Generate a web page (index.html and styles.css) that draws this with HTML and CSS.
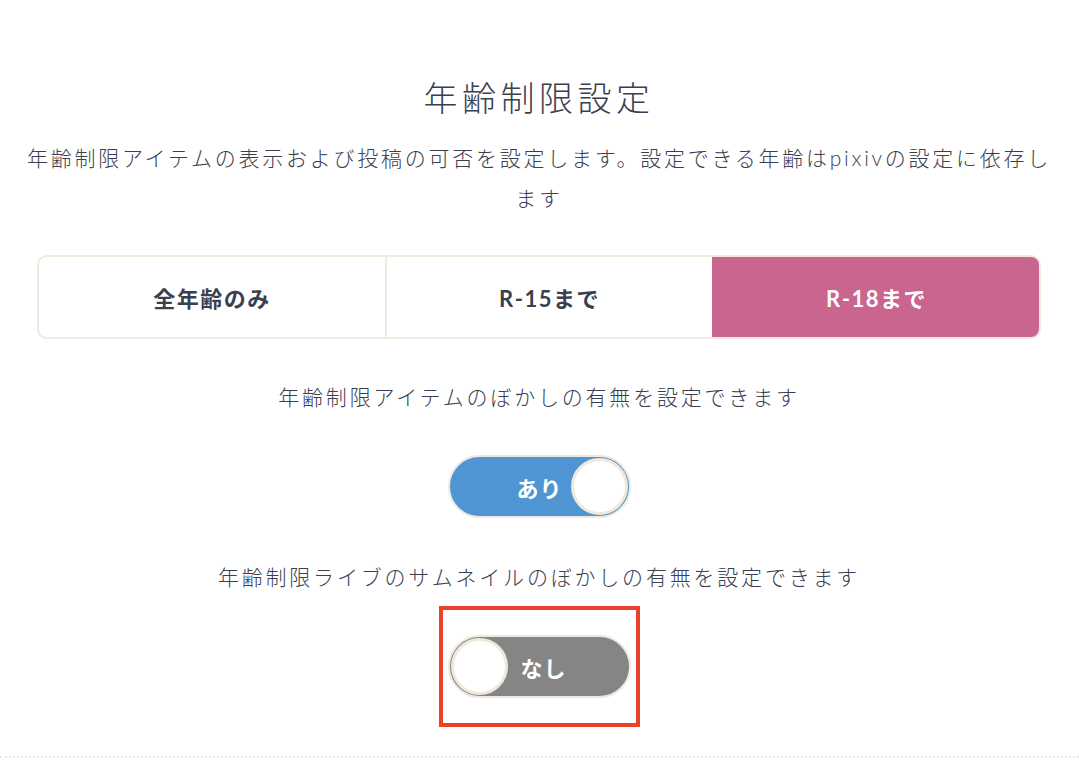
FILE: index.html
```html
<!DOCTYPE html>
<html lang="ja">
<head>
<meta charset="utf-8">
<link rel="stylesheet" href="styles.css">
</head>
<body>
<section class="settings">
  <h1 class="title">年齢制限設定</h1>
  <p class="desc">年齢制限アイテムの表示および投稿の可否を設定します。設定できる年齢はpixivの設定に依存します</p>
  <div class="segments">
    <div class="seg seg-all">全年齢のみ</div>
    <div class="seg seg-r15">R-15まで</div>
    <div class="seg seg-r18 active">R-18まで</div>
  </div>
  <p class="label">年齢制限アイテムのぼかしの有無を設定できます</p>
  <div class="toggle-row">
    <div class="toggle on"><span class="toggle-text">あり</span><span class="knob"></span></div>
  </div>
  <p class="label label-2">年齢制限ライブのサムネイルのぼかしの有無を設定できます</p>
  <div class="toggle-row">
    <div class="highlight">
      <div class="toggle off"><span class="knob"></span><span class="toggle-text">なし</span></div>
    </div>
  </div>
  <div class="divider"></div>
</section>
</body>
</html>
```
FILE: styles.css
```css
html, body {
  margin: 0;
  padding: 0;
  background: #ffffff;
}
body {
  font-family: "Lato", "Noto Sans CJK JP", sans-serif;
  color: #3b4050;
}
.settings {
  padding: 74px 38px 0 37px;
  display: flex;
  flex-direction: column;
  align-items: stretch;
}
.title {
  margin: 0;
  text-align: center;
  font-size: 34px;
  font-weight: 300;
  letter-spacing: 4.5px;
  line-height: 48px;
  color: #3b4050;
}
.desc {
  margin: 16px -20px 0 -20px;
  text-align: center;
  font-size: 21px;
  font-weight: 300;
  letter-spacing: 2.75px;
  line-height: 40px;
}
.segments {
  margin-top: 37px;
  display: flex;
  height: 84px;
  box-sizing: border-box;
  border: 2px solid #f1eadf;
  border-radius: 10px;
  overflow: hidden;
}
.seg {
  display: flex;
  align-items: center;
  justify-content: center;
  font-size: 22px;
  font-weight: 700;
  letter-spacing: 1.5px;
  color: #3b4050;
}
.seg-all { width: 346px; border-right: 2px solid #f1eadf; }
.seg-r15 { width: 325px; }
.seg-r18 { flex: 1; }
.seg.active {
  background: #c9658e;
  color: #ffffff;
  margin: -2px -2px -2px 0;
}
.label {
  margin: 38px 0 0 0;
  text-align: center;
  font-size: 21px;
  font-weight: 300;
  letter-spacing: 2.8px;
  line-height: 40px;
}
.label-2 {
  margin-top: 39px;
}
.toggle-row {
  display: flex;
  justify-content: center;
  margin-top: 38px;
}
.label-2 + .toggle-row {
  margin-top: 9px;
}
.toggle {
  width: 183px;
  height: 63px;
  box-sizing: border-box;
  border: 2px solid #efe8dc;
  border-radius: 32px;
  display: flex;
  align-items: center;
  padding: 0 1px;
}
.toggle.on {
  background: #4f95d3;
  justify-content: flex-end;
}
.toggle.off {
  background: #858585;
  justify-content: flex-start;
}
.toggle-text {
  color: #ffffff;
  font-size: 22px;
  font-weight: 700;
  letter-spacing: 1px;
}
.toggle.on .toggle-text { margin-right: 8px; }
.toggle.off .toggle-text { margin-left: 13px; }
.knob {
  width: 57px;
  height: 57px;
  box-sizing: border-box;
  border-radius: 50%;
  background: #ffffff;
  border: 3px solid #efe8dc;
}
.highlight {
  border: 4px solid #e8432a;
  padding: 25px 5px;
}
.divider {
  margin: 29px -38px 0 -37px;
  border-top: 2px dotted #efe8dc;
}
```
